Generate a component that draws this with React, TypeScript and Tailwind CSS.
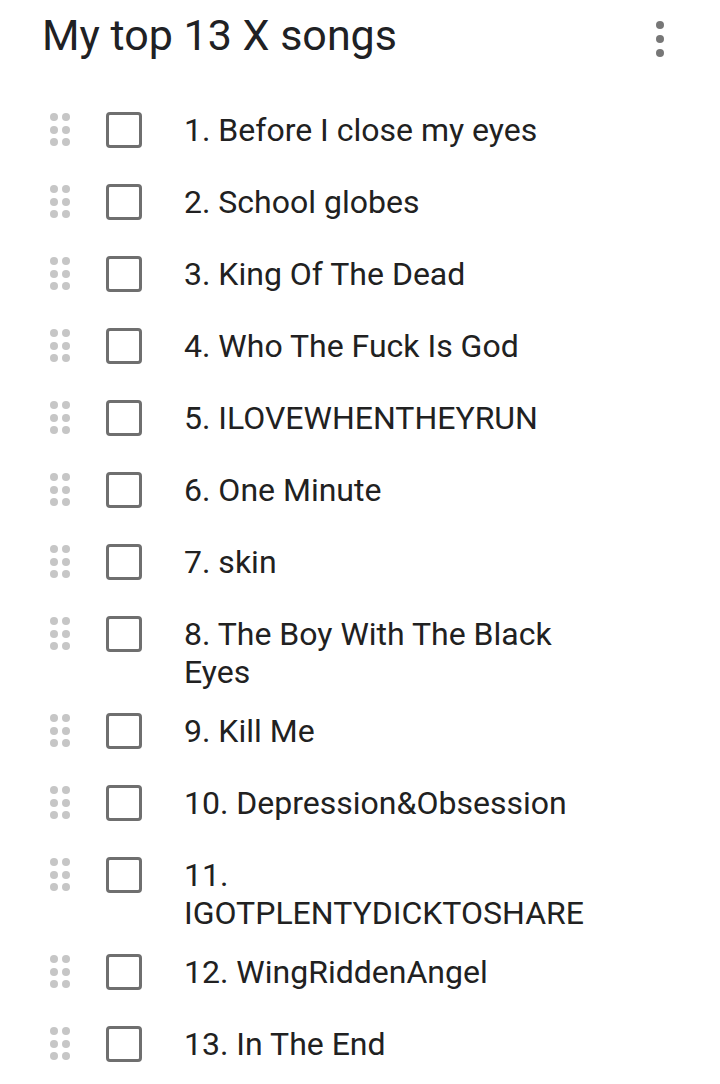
import React from "react";

const songs = [
  "1. Before I close my eyes",
  "2. School globes",
  "3. King Of The Dead",
  "4. Who The Fuck Is God",
  "5. ILOVEWHENTHEYRUN",
  "6. One Minute",
  "7. skin",
  "8. The Boy With The Black Eyes",
  "9. Kill Me",
  "10. Depression&Obsession",
  "11. IGOTPLENTYDICKTOSHARE",
  "12. WingRiddenAngel",
  "13. In The End",
];

function Handle() {
  return (
    <svg width="24" height="34" viewBox="0 0 24 34" className="block">
      {[4, 17, 29].map((y) => (
        <g key={y}>
          <circle cx="4" cy={y} r="4" fill="#c6c6c6" />
          <circle cx="16" cy={y} r="4" fill="#c6c6c6" />
        </g>
      ))}
    </svg>
  );
}

export default function App() {
  return (
    <div
      className="w-[720px] h-[1084px] bg-white overflow-hidden"
      style={{ fontFamily: "Roboto, 'Noto Sans', sans-serif" }}
    >
      <div className="flex items-start justify-between pl-[42px] pr-[56px] pt-[7px] h-[94px]">
        <h1 className="text-[43px] leading-[56px] text-[#202124] font-normal">
          My top 13 X songs
        </h1>
        <div className="flex flex-col gap-[6px] pt-[14px]">
          <span className="block w-[8px] h-[8px] rounded-full bg-[#777]" />
          <span className="block w-[8px] h-[8px] rounded-full bg-[#777]" />
          <span className="block w-[8px] h-[8px] rounded-full bg-[#777]" />
        </div>
      </div>
      <div className="flex flex-col">
        {songs.map((s) => (
          <div key={s} className="flex items-start min-h-[72px]">
            <div className="ml-[50px] mt-[19px] w-[24px]">
              <Handle />
            </div>
            <div className="ml-[32px] mt-[18px] w-[36px] h-[36px] border-[3.5px] border-[#6f6f6f] rounded-[4px] shrink-0" />
            <div className="ml-[42px] pt-[17px] pb-[4px] w-[420px] text-[32px] leading-[38px] text-[#212121]">
              {s}
            </div>
          </div>
        ))}
      </div>
    </div>
  );
}
